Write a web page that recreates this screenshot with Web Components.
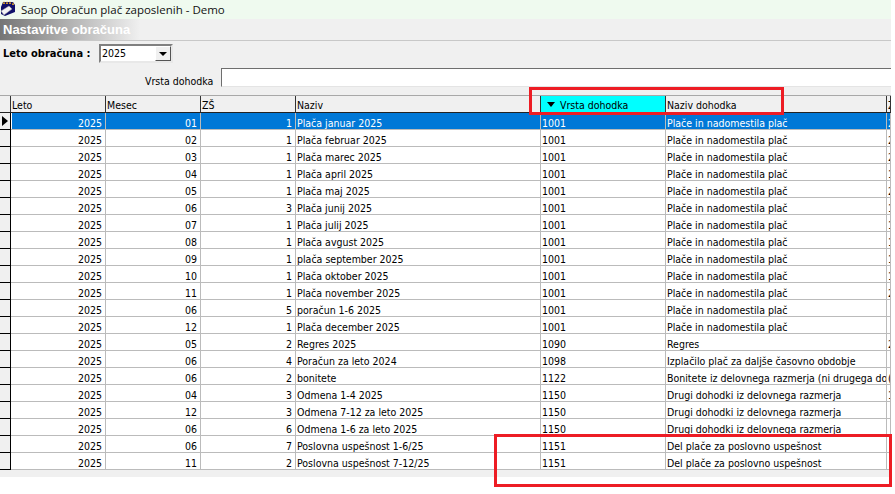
<!DOCTYPE html>
<html>
<head>
<meta charset="utf-8">
<title>Saop Obračun plač zaposlenih - Demo</title>
<style>
  html, body { margin: 0; padding: 0; background: #fff; }
  body { font: 10.5px "DejaVu Sans Condensed", "Liberation Sans", sans-serif; color: #000; overflow: hidden; }
  #app { position: relative; width: 891px; height: 494px; display: flex; flex-direction: column; }
</style>
</head>
<body>
<div id="app">
  <title-bar>Saop Obračun plač zaposlenih - Demo</title-bar>
  <section-head>Nastavitve obračuna</section-head>
  <filter-panel></filter-panel>
  <data-grid></data-grid>
  <red-mark style="left:529px;top:87px;width:249px;height:22px"></red-mark>
  <red-mark style="left:494px;top:434px;width:392px;height:47px"></red-mark>
</div>

<script>
class TitleBar extends HTMLElement {
  constructor() {
    super();
    this.attachShadow({ mode: "open" });
    this.shadowRoot.innerHTML = `
      <style>
        :host { display: flex; align-items: center; gap: 5px; height: 19px; flex: none; background: #effaef; font: 11.5px "Open Sans", sans-serif; color: #111; }
        svg { flex: none; width: 16px; height: 16px; margin-top: -2px; }
      </style>
      <svg viewBox="0 0 16 16">
        <path d="M1 6 L3 1 L13 1 L15 4 L15 11 L5 15 L1 13 Z" fill="#10106a"/>
        <path d="M3 3 L4 0 L5 3 M6 3 L7 0 L8 3 M9 3 L10 0 L11 3 M12 4 L13 1 L14 4" fill="#f0b020"/>
        <path d="M1 10 L9 5 L12 8 L4 14 Z" fill="#f4f4f4" stroke="#999" stroke-width=".5"/>
      </svg>
      <slot></slot>
    `;
  }
}
customElements.define("title-bar", TitleBar);

class SectionHead extends HTMLElement {
  constructor() {
    super();
    this.attachShadow({ mode: "open" });
    this.shadowRoot.innerHTML = `
      <style>
        :host { display: flex; align-items: center; height: 21px; flex: none; padding-left: 3px; box-sizing: border-box;
          background: linear-gradient(90deg, #757575 0, #f0f0f0 140px); color: #fff; font: bold 13px "Liberation Sans", sans-serif; }
      </style>
      <slot></slot>
    `;
  }
}
customElements.define("section-head", SectionHead);

class FilterPanel extends HTMLElement {
  constructor() {
    super();
    this.attachShadow({ mode: "open" });
    this.shadowRoot.innerHTML = `
      <style>
        :host { display: block; height: 55px; flex: none; background: #f0f0f0; box-sizing: border-box; border-top: 1px solid #c8c8c8; font: 10.5px "DejaVu Sans Condensed", sans-serif; }
        .year { display: flex; align-items: center; height: 19px; margin-top: 3px; padding-left: 3px; }
        .year b { width: 96px; font-size: 11px; }
        .combo { display: flex; justify-content: space-between; width: 74px; height: 19px; box-sizing: border-box; background: #fff; border: 2px solid; border-color: #808080 #e8e8e8 #e8e8e8 #808080; padding-left: 1px; line-height: 15px; }
        .btn { width: 16px; background: #f0f0f0; border: 1px solid; border-color: #fff #555 #555 #fff; box-sizing: border-box; display: flex; align-items: center; justify-content: center; }
        .btn i { border: 4px solid transparent; border-top: 4px solid #000; border-bottom: 0; }
        .kind { display: flex; height: 19px; margin-top: 5px; padding-left: 145px; }
        .kind span { width: 76px; line-height: 27px; height: 19px; white-space: nowrap; }
        .kind input { flex: 1; min-width: 0; height: 19px; box-sizing: border-box; border: 0; border-top: 1px solid #6e6e6e; border-left: 1px solid #6e6e6e; border-bottom: 1px solid #e4e4e4; background: #fff; padding: 0; margin: 0; outline: 0; }
      </style>
      <div class="year">
        <b>Leto obračuna :</b>
        <div class="combo">2025<span class="btn"><i></i></span></div>
      </div>
      <div class="kind">
        <span>Vrsta dohodka</span>
        <input type="text">
      </div>
    `;
  }
}
customElements.define("filter-panel", FilterPanel);

const COLS = ["Leto", "Mesec", "ZŠ", "Naziv", "Vrsta dohodka", "Naziv dohodka", "Z"];
const PL = "Plače in nadomestila plač";
const DR = "Drugi dohodki iz delovnega razmerja";
const DP = "Del plače za poslovno uspešnost";
const ROWS = [
  ["01", 1, "Plača januar 2025", 1001, PL, "2"],
  ["02", 1, "Plača februar 2025", 1001, PL, "2"],
  ["03", 1, "Plača marec 2025", 1001, PL, "2"],
  ["04", 1, "Plača april 2025", 1001, PL, "1"],
  ["05", 1, "Plača maj 2025", 1001, PL, "2"],
  ["06", 3, "Plača junij 2025", 1001, PL, "1"],
  ["07", 1, "Plača julij 2025", 1001, PL, "1"],
  ["08", 1, "Plača avgust 2025", 1001, PL, "1"],
  ["09", 1, "plača september 2025", 1001, PL, "1"],
  ["10", 1, "Plača oktober 2025", 1001, PL, "1"],
  ["11", 1, "Plača november 2025", 1001, PL, "2"],
  ["06", 5, "poračun 1-6 2025", 1001, PL, ""],
  ["12", 1, "Plača december 2025", 1001, PL, ""],
  ["05", 2, "Regres 2025", 1090, "Regres", "2"],
  ["06", 4, "Poračun za leto 2024", 1098, "Izplačilo plač za daljše časovno obdobje", ""],
  ["06", 2, "bonitete", 1122, "Bonitete iz delovnega razmerja (ni drugega dohodka)", "("],
  ["04", 3, "Odmena 1-4 2025", 1150, DR, "1"],
  ["12", 3, "Odmena 7-12 za leto 2025", 1150, DR, ""],
  ["06", 6, "Odmena 1-6 za leto 2025", 1150, DR, ""],
  ["06", 7, "Poslovna uspešnost 1-6/25", 1151, DP, ""],
  ["11", 2, "Poslovna uspešnost 7-12/25", 1151, DP, ""],
];

class DataGrid extends HTMLElement {
  constructor() {
    super();
    this.attachShadow({ mode: "open" });
    const head = COLS.map((c, i) => {
      if (i === 4) return `<div class="h sort"><i></i>${c}</div>`;
      return `<div class="h">${c}</div>`;
    }).join("");
    const body = ROWS.map((r, i) => `
      <div class="row${i === 0 ? " sel" : ""}">
        <div class="rh">${i === 0 ? "<i></i>" : ""}</div>
        <div class="c num">2025</div>
        <div class="c num">${r[0]}</div>
        <div class="c num">${r[1]}</div>
        <div class="c">${r[2]}</div>
        <div class="c">${r[3]}</div>
        <div class="c">${r[4]}</div>
        <div class="c">${r[5]}</div>
      </div>`).join("");
    this.shadowRoot.innerHTML = `
      <style>
        :host { display: block; flex: 1; background: #fff; font: 10.5px "DejaVu Sans Condensed", sans-serif; }
        .row, .top { display: grid; grid-template-columns: 11px 95px 95px 95px 245px 125px 221px 1fr; height: 17px; }
        .top { background: #f0f0f0; border-top: 1px solid #a8a8a8; border-bottom: 1px solid #222; height: 16px; }
        .h { border-right: 1px solid #333; padding-left: 1px; line-height: 19px; white-space: nowrap; overflow: hidden; }
        .h:first-child { padding: 0; }
        .h.sort { background: #00ffff; padding-left: 6px; display: flex; align-items: center; gap: 5px; line-height: 16px; padding-top: 1px; }
        .h.sort i { border: 4.5px solid transparent; border-top: 5px solid #000; border-bottom: 0; }
        .row > div { box-sizing: border-box; height: 17px; }
        .rh { background: #f0f0f0; border-right: 1px solid #000; border-bottom: 1px solid #000; display: flex; align-items: center; padding-left: 2px; }
        .rh i { border: 5px solid transparent; border-left: 6px solid #000; border-right: 0; }
        .c { border-right: 1px solid #bbb; border-bottom: 1px solid #bbb; padding-left: 1px; line-height: 20px; white-space: nowrap; overflow: hidden; }
        .num { text-align: right; padding: 0 3px 0 0; }
        .sel .c { background: #0078d7; color: #fff; }
        .sel .c:nth-child(2) { box-shadow: inset 1px 0 #fff; }
        .foot { height: 7px; background: #f0f0f0; }
      </style>
      <div class="top"><div class="h"></div>${head}</div>
      ${body}
      <div class="foot"></div>
    `;
  }
}
customElements.define("data-grid", DataGrid);

class RedMark extends HTMLElement {
  constructor() {
    super();
    this.attachShadow({ mode: "open" });
    this.shadowRoot.innerHTML = `
      <style>
        :host { display: block; position: absolute; border: 3px solid #ed1c24; }
      </style>
    `;
  }
}
customElements.define("red-mark", RedMark);
</script>
</body>
</html>
